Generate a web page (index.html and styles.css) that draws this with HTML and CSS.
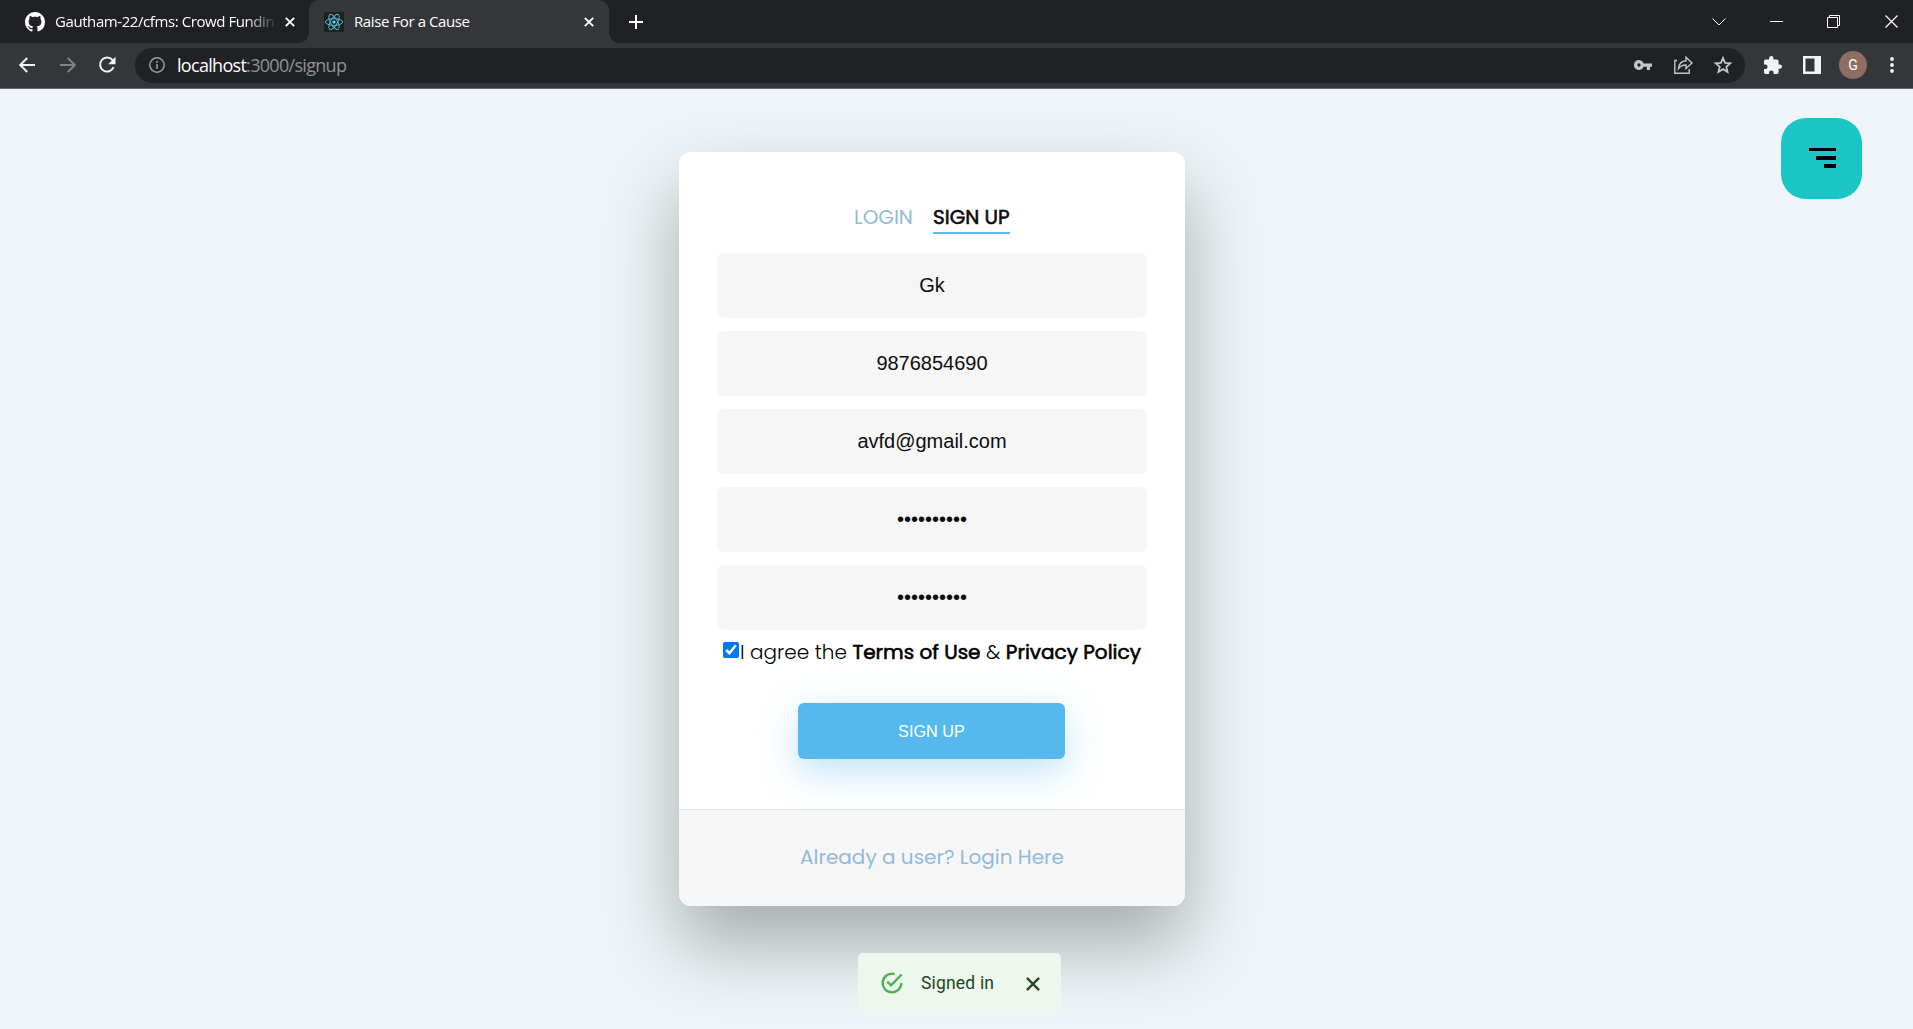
FILE: index.html
```html
<!DOCTYPE html>
<html lang="en">
<head>
<meta charset="utf-8">
<title>Raise For a Cause</title>
<link rel="stylesheet" href="styles.css">
</head>
<body>
<div class="browser">
  <header class="tabstrip">
    <div class="tab tab-first">
      <svg class="fav" viewBox="0 0 16 16"><path fill="#fff" d="M8 0C3.58 0 0 3.58 0 8c0 3.54 2.29 6.53 5.47 7.59.4.07.55-.17.55-.38 0-.19-.01-.82-.01-1.49-2.01.37-2.53-.49-2.69-.94-.09-.23-.48-.94-.82-1.13-.28-.15-.68-.52-.01-.53.63-.01 1.08.58 1.23.82.72 1.21 1.87.87 2.33.66.07-.52.28-.87.51-1.07-1.78-.2-3.64-.89-3.64-3.95 0-.87.31-1.59.82-2.15-.08-.2-.36-1.02.08-2.12 0 0 .67-.21 2.2.82.64-.18 1.32-.27 2-.27s1.36.09 2 .27c1.53-1.04 2.2-.82 2.2-.82.44 1.1.16 1.92.08 2.12.51.56.82 1.27.82 2.15 0 3.07-1.87 3.75-3.65 3.95.29.25.54.73.54 1.48 0 1.07-.01 1.93-.01 2.2 0 .21.15.46.55.38A8.01 8.01 0 0 0 16 8c0-4.42-3.58-8-8-8z"/></svg>
      <span class="tab-title fade"><span class="t1">Gautham-22/cfms: Crowd Fundin</span></span>
      <svg class="x" viewBox="0 0 10 10"><path d="M.8.8l8.400 8.400M9.200.8L.8 9.200"/></svg>
    </div>
    <div class="tab tab-active">
      <svg class="fav" viewBox="0 0 20 20"><rect width="20" height="20" rx="1" fill="#202020"/><g fill="none" stroke="#55bcd2" stroke-width=".95"><ellipse cx="10" cy="10" rx="8.6" ry="3.4"/><ellipse cx="10" cy="10" rx="8.6" ry="3.4" transform="rotate(60 10 10)"/><ellipse cx="10" cy="10" rx="8.6" ry="3.4" transform="rotate(120 10 10)"/></g><circle cx="10" cy="10" r="1.6" fill="#61dafb"/></svg>
      <span class="tab-title"><span class="t2">Raise For a Cause</span></span>
      <svg class="x" viewBox="0 0 10 10"><path d="M.8.8l8.400 8.400M9.200.8L.8 9.200"/></svg>
    </div>
    <svg class="plus" viewBox="0 0 16 16"><path d="M8 1v14M1 8h14"/></svg>
    <div class="window-buttons">
      <svg width="14" height="8" viewBox="0 0 14 8"><path d="M.5.5L7 7l6.500-6.500"/></svg>
      <svg width="13" height="13" viewBox="0 0 13 13"><path d="M0 6.500h13"/></svg>
      <svg width="13" height="13" viewBox="0 0 13 13"><path d="M.5 2.500h10v10H.5zM2.500 2.500v-2h10v10h-2"/></svg>
      <svg class="close" width="13" height="13" viewBox="0 0 13 13"><path stroke-width="1.200" d="M.5.5l12 12M12.500.5l-12 12"/></svg>
    </div>
  </header>
  <div class="toolbar">
    <svg class="nav back" viewBox="0 0 16 16"><path d="M16 8H1.500M8.200 1L1.200 8l7 7"/></svg>
    <svg class="nav forward" viewBox="0 0 16 16"><path d="M0 8h14.500M7.800 1l7 7-7 7"/></svg>
    <svg class="nav reload" viewBox="0 0 18 18"><path d="M14.600 4.200A7 7 0 1 0 15.600 11.200"/><path class="solid" d="M17.500.8v7.400h-7.400z"/></svg>
    <div class="omnibox">
      <svg class="info" viewBox="0 0 16 16"><circle cx="8" cy="8" r="7.200"/><path d="M8 7v5M8 4v1.900"/></svg>
      <span class="url"><b>localhost</b>:3000/signup</span>
      <svg class="key" viewBox="0 0 18 10"><path d="M9.600 3.400A5 5 0 1 0 9.600 6.700H12.800V10H16V6.700H18V3.400zM5 6.700A1.700 1.700 0 1 1 5 3.300a1.700 1.700 0 0 1 0 3.400z"/></svg>
      <svg class="share" viewBox="0 0 19 18"><path d="M3 4.500H.8v12.700h14.400V13M4.500 12.500C5 7.500 8 5 12 4.800V1.200l6 5.800-6 5.500V9C8.500 9 6.300 10 4.500 12.500z"/></svg>
      <svg class="star" viewBox="0 0 18 18"><path d="M9 2l2.050 4.850 5.250.45-4 3.450 1.200 5.150L9 13.150 4.500 15.900l1.200-5.150-4-3.450 5.250-.45z"/></svg>
    </div>
    <svg class="puzzle" viewBox="2 1 21 21"><path d="M20.500 11H19V7c0-1.100-.9-2-2-2h-4V3.500a2.500 2.500 0 0 0-5 0V5H4c-1.100 0-2 .9-2 2v3.800h1.500a2.700 2.700 0 0 1 0 5.400H2V20c0 1.100.9 2 2 2h3.800v-1.500a2.700 2.700 0 0 1 5.400 0V22H17c1.100 0 2-.9 2-2v-4h1.500a2.500 2.500 0 0 0 0-5z"/></svg>
    <svg class="panel" viewBox="0 0 18 18"><path fill-rule="evenodd" d="M0 0h18v18H0zM2.500 2.500v13h9v-13z"/></svg>
    <span class="avatar">G</span>
    <svg class="dots" viewBox="0 0 4 16"><circle cx="2" cy="2" r="1.900"/><circle cx="2" cy="8" r="1.900"/><circle cx="2" cy="14" r="1.900"/></svg>
  </div>
</div>
<main class="page">
  <form class="card">
    <div class="card-body">
      <h2 class="modes"><a class="mode-login">LOGIN</a><a class="mode-signup">SIGN UP</a></h2>
      <input class="field" type="text" value="Gk">
      <input class="field" type="text" value="9876854690">
      <input class="field" type="text" value="avfd@gmail.com">
      <input class="field" type="password" value="abcdefghij">
      <input class="field" type="password" value="abcdefghij">
      <label class="agree"><input type="checkbox" checked><span>I agree the <b>Terms of Use</b> &amp; <b>Privacy Policy</b></span></label>
      <button class="submit" type="button">SIGN UP</button>
    </div>
    <footer class="card-footer"><a>Already a user? Login Here</a></footer>
  </form>
  <button class="menu" type="button" aria-label="Menu"><i class="bar"></i><i class="bar mid"></i><i class="bar short"></i></button>
  <div class="toast">
    <svg class="ok" viewBox="0 0 24 24"><path d="M20 12A8 8 0 1 1 14.200 4.300M7.900 10.800l3.200 3.200L20.300 4.700"/></svg>
    <span>Signed in</span>
    <svg class="dismiss" viewBox="0 0 14 14"><path d="M.9.9l12.200 12.200M13.100.9L.9 13.100"/></svg>
  </div>
</main>
</body>
</html>
```
FILE: styles.css
```css
* { box-sizing: border-box; }
body { margin: 0; width: 100%; height: 1029px; overflow: hidden; background: #eef4f7; font-family: Poppins, Inter, sans-serif; }
svg { display: block; flex: none; fill: none; stroke: #fff; }

/* Browser chrome */
.browser { height: 89px; font-family: "Segoe UI", "Open Sans", sans-serif; color: #fff; }
.tabstrip { display: flex; align-items: center; height: 43px; background: #202124; }
.tab { display: flex; align-items: center; height: 43px; }
.tab-first { width: 309px; padding: 0 14px 0 25px; }
.tab-active { position: relative; width: 300px; padding: 0 15px; background: #35363a; border-radius: 10px 10px 0 0; }
.tab-active::before, .tab-active::after { content: ""; position: absolute; bottom: 0; width: 10px; height: 10px; }
.tab-active::before { left: -10px; background: radial-gradient(circle at 0 0, #202124 9.500px, #35363a 10px); }
.tab-active::after { right: -10px; background: radial-gradient(circle at 100% 0, #202124 9.500px, #35363a 10px); }
.fav { width: 20px; height: 20px; margin-right: 10px; stroke: none; }
.tab-title { flex: 1; white-space: nowrap; font-size: 15px; line-height: 22px; position: relative; top: -1px; }
.fade { flex: none; width: 219px; margin-right: 11px; -webkit-mask-image: linear-gradient(90deg, #000 190px, transparent 223px); mask-image: linear-gradient(90deg, #000 190px, transparent 223px); }
.t1 { letter-spacing: -.42px; }
.t2 { letter-spacing: -.4px; }
.x { width: 10px; height: 10px; stroke-width: 1.900; }
.plus { width: 16px; height: 16px; margin-left: 19px; stroke-width: 2; }
.window-buttons { display: flex; align-items: center; margin-left: auto; margin-right: 15px; gap: 44px; }
.close { margin-left: 1px; }
.toolbar { display: flex; align-items: center; height: 46px; padding: 0 0 1px 19px; background: #35363a; border-bottom: 1px solid #626366; }
.nav { width: 16px; height: 16px; stroke-width: 2; stroke: #f1f3f4; }
.forward { margin-left: 25px; stroke: #7f8083; }
.reload { width: 18px; height: 18px; margin-left: 22px; }
.solid { fill: #f1f3f4; stroke: none; }
.omnibox { display: flex; align-items: center; width: 1610px; height: 35px; margin-left: 19px; padding: 0 13px 0 14px; border-radius: 18px; background: #202124; }
.info { width: 16px; height: 16px; stroke: #9aa0a6; stroke-width: 1.500; }
.url { flex: 1; margin-left: 12px; font-size: 18px; letter-spacing: -.7px; line-height: 30px; color: #8f9194; }
.url b { font-weight: 400; color: #fff; }
.key { width: 18px; height: 10px; margin-right: 22px; fill: #c4c5c7; stroke: none; }
.share { width: 19px; height: 18px; margin-right: 21px; stroke: #c4c5c7; stroke-width: 1.400; }
.star { width: 18px; height: 18px; stroke: #c4c5c7; stroke-width: 1.800; }
.puzzle { width: 18px; height: 18px; margin-left: 19px; fill: #f1f3f4; stroke: none; }
.panel { width: 18px; height: 18px; margin-left: 21px; fill: #f1f3f4; stroke: none; }
.avatar { width: 28px; height: 28px; margin-left: 18px; border-radius: 50%; background: #8d6e63; font: 14px/28px Roboto, sans-serif; text-align: center; }
.dots { width: 4px; height: 16px; margin-left: 23px; fill: #f1f3f4; stroke: none; }

/* Page */
.page { position: relative; height: 940px; padding-top: 63px; }
.card { width: 506px; height: 754px; margin-left: 679px; border-radius: 12px; background: #fff; overflow: hidden; box-shadow: 0 37.500px 75px rgba(0, 0, 0, .3); }
.card-body { display: flex; flex-direction: column; align-items: center; height: 657px; padding: 50px 38px 0; }
.modes { display: flex; gap: 20px; width: 100%; height: 32px; margin: 0 0 19px; padding-left: 137px; font-size: 20px; line-height: 30px; font-weight: 400; white-space: nowrap; }
.mode-login { width: 59px; color: #92badd; }
.mode-signup { width: 77px; color: #0d0d0d; -webkit-text-stroke: .6px #0d0d0d; border-bottom: 2px solid #5fbae9; }
.field { flex: none; width: 430px; height: 65px; margin-bottom: 13px; padding: 0 0 1px; border: 0; border-radius: 6px; background: #f6f6f6; color: #0d0d0d; font: 20px Arial, "Liberation Sans", sans-serif; text-align: center; }
.agree { display: flex; align-items: center; width: 418px; height: 30px; margin-top: -6px; font-size: 20px; line-height: 30px; font-weight: 300; white-space: nowrap; color: #000; }
.agree input { flex: none; width: 16px; height: 16px; margin: 0 1px 4px 0; }
.agree b { font-weight: 400; -webkit-text-stroke: .6px #000; }
.submit { flex: none; width: 267px; height: 56px; margin: 36px 1px 0 0; padding: 0; border: 0; border-radius: 6px; background: #56b9ed; color: #fff; font: 16.250px Arial, "Liberation Sans", sans-serif; box-shadow: 0 12.500px 37.500px rgba(95, 186, 233, .4); }
.card-footer { height: 97px; padding-top: 32px; border-top: 1px solid #dce8f1; background: #f6f6f6; color: #92badd; font-size: 20px; line-height: 30px; text-align: center; }
.menu { position: absolute; top: 29px; left: 1781px; display: flex; flex-direction: column; align-items: flex-end; justify-content: flex-start; gap: 4.800px; width: 81px; height: 81px; padding: 29.800px 26.500px 0 0; border: 0; border-radius: 25px; background: #19c5c5; }
.bar { width: 27px; height: 3.500px; background: #000; }
.mid { width: 20px; }
.short { width: 12px; }
.toast { position: absolute; top: 864px; left: 858px; display: flex; align-items: center; width: 203px; height: 60px; padding-left: 20px; border-radius: 5px; background: #edf7ed; color: #1e4620; font: 17.500px Roboto, sans-serif; white-space: nowrap; }
.ok { width: 28px; height: 28px; margin-right: 15px; stroke: #4caf50; stroke-width: 2; }
.toast span { width: 105px; letter-spacing: .18px; }
.dismiss { width: 14px; height: 14px; stroke: #1e4620; stroke-width: 2.200; margin-top: 2px; }
```
